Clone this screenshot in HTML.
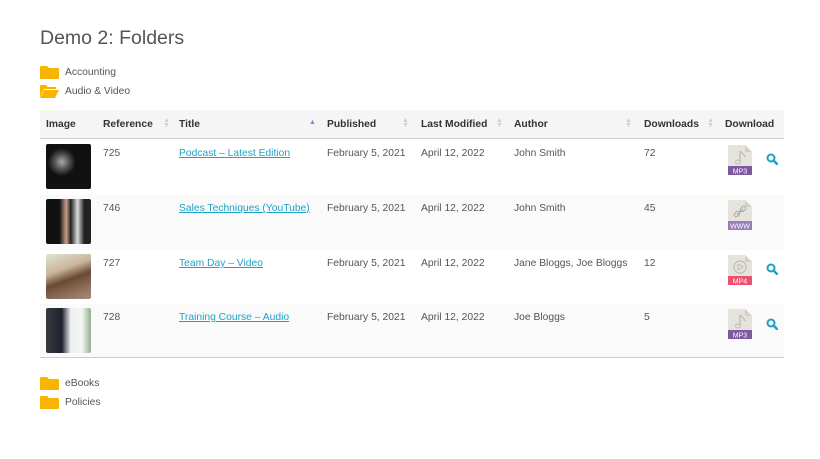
<!DOCTYPE html>
<html><head><meta charset="utf-8"><style>
*{margin:0;padding:0;box-sizing:border-box}
body{width:820px;height:459px;background:#fff;font-family:"Liberation Sans",sans-serif;color:#555;font-size:10.3px;position:relative;overflow:hidden}
.a{position:absolute;white-space:nowrap}
h1{position:absolute;left:40px;top:27px;font-size:19.5px;font-weight:normal;color:#555}
.f{position:absolute;left:40px;width:19px;height:13px}
.hdr{position:absolute;left:40px;top:110px;width:744px;height:29px;background:#f5f5f5;border-bottom:1px solid #ccc}
.th{position:absolute;top:119px;font-weight:bold;color:#333;font-size:10.3px}
.ar{position:absolute;top:118px;color:#d0d0d0;font-size:7px;line-height:5px}
.row{position:absolute;left:40px;width:744px;height:55px}
.td{position:absolute;font-size:10.3px;color:#555}
a{color:#1ea1c8;text-decoration:underline}
.thumb{position:absolute;left:46px;width:45px;height:45px;border-radius:2px}
</style></head><body>
<h1>Demo 2: Folders</h1>
<svg class="f" style="top:66px" viewBox="0 0 19 13"><path d="M0 1Q0 0 1 0H7L9 2H18Q19 2 19 3V12Q19 13 18 13H1Q0 13 0 12Z" fill="#f7b500"/></svg>
<div class="a" style="left:65px;top:67px">Accounting</div>
<svg class="f" style="top:85px" viewBox="0 0 19 13"><path d="M0 1Q0 0 1 0H6L8 2H16V4H4L0 12Z" fill="#f7b500"/><path d="M4 5H19L15 13H0Z" fill="#f7b500"/></svg>
<div class="a" style="left:65px;top:86px">Audio &amp; Video</div>

<div class="hdr"></div>
<div class="a th" style="left:46px">Image</div>
<div class="a th" style="left:103px">Reference</div><div class="ar" style="left:163px">▲<br>▼</div>
<div class="a th" style="left:179px">Title</div><div class="a" style="left:309px;top:119px;color:#8a7fd6;font-size:7px">▲</div>
<div class="a th" style="left:327px">Published</div><div class="ar" style="left:402px">▲<br>▼</div>
<div class="a th" style="left:421px">Last Modified</div><div class="ar" style="left:496px">▲<br>▼</div>
<div class="a th" style="left:514px">Author</div><div class="ar" style="left:625px">▲<br>▼</div>
<div class="a th" style="left:644px">Downloads</div><div class="ar" style="left:707px">▲<br>▼</div>
<div class="a th" style="left:725px">Download</div>

<div class="row" style="top:140px;background:#fff"></div>
<div class="row" style="top:195px;background:#fafafa"></div>
<div class="row" style="top:250px;background:#fff"></div>
<div class="row" style="top:304px;background:#fafafa;height:54px;border-bottom:1px solid #ccc"></div>

<div class="thumb" style="top:144px;background:radial-gradient(circle at 35% 40%,#aaa 0,#555 18%,#111 35%),#111"></div>
<div class="thumb" style="top:199px;background:linear-gradient(90deg,#111 30%,#c9a08a 45%,#222 55%,#ddd 70%,#222 85%)"></div>
<div class="thumb" style="top:254px;background:linear-gradient(160deg,#dfe6d5 0,#c9b49a 35%,#6b4a35 55%,#8a6a55 75%,#a58e7a)"></div>
<div class="thumb" style="top:308px;background:linear-gradient(90deg,#3a3a40 0,#1c2230 35%,#eef0f0 55%,#f5f5f5 80%,#8fb08a)"></div>

<div class="a td" style="left:103px;top:148px">725</div>
<div class="a td" style="left:179px;top:148px"><a>Podcast – Latest Edition</a></div>
<div class="a td" style="left:327px;top:148px">February 5, 2021</div>
<div class="a td" style="left:421px;top:148px">April 12, 2022</div>
<div class="a td" style="left:514px;top:148px">John Smith</div>
<div class="a td" style="left:644px;top:148px">72</div>

<div class="a td" style="left:103px;top:203px">746</div>
<div class="a td" style="left:179px;top:203px"><a>Sales Techniques (YouTube)</a></div>
<div class="a td" style="left:327px;top:203px">February 5, 2021</div>
<div class="a td" style="left:421px;top:203px">April 12, 2022</div>
<div class="a td" style="left:514px;top:203px">John Smith</div>
<div class="a td" style="left:644px;top:203px">45</div>

<div class="a td" style="left:103px;top:258px">727</div>
<div class="a td" style="left:179px;top:258px"><a>Team Day – Video</a></div>
<div class="a td" style="left:327px;top:258px">February 5, 2021</div>
<div class="a td" style="left:421px;top:258px">April 12, 2022</div>
<div class="a td" style="left:514px;top:258px">Jane Bloggs, Joe Bloggs</div>
<div class="a td" style="left:644px;top:258px">12</div>

<div class="a td" style="left:103px;top:312px">728</div>
<div class="a td" style="left:179px;top:312px"><a>Training Course – Audio</a></div>
<div class="a td" style="left:327px;top:312px">February 5, 2021</div>
<div class="a td" style="left:421px;top:312px">April 12, 2022</div>
<div class="a td" style="left:514px;top:312px">Joe Bloggs</div>
<div class="a td" style="left:644px;top:312px">5</div>

<svg class="a" style="left:728px;top:145px" width="24" height="30" viewBox="0 0 24 30"><path d="M0 0H17L24 7V22H0Z" fill="#e6e3dc"/><path d="M17 0V7H24" fill="#d4d0c6"/><path d="M12 6V17M12 6Q16 9 17 12" stroke="#bbb" stroke-width="1.2" fill="none"/><ellipse cx="10" cy="17" rx="2.5" ry="2" fill="none" stroke="#bbb"/><rect y="21" width="24" height="9" fill="#7d5aa0"/><text x="12" y="28.5" font-size="7" fill="#fff" text-anchor="middle" font-family="Liberation Sans">MP3</text></svg>
<svg class="a" style="left:728px;top:200px" width="24" height="30" viewBox="0 0 24 30"><path d="M0 0H17L24 7V22H0Z" fill="#e6e3dc"/><path d="M17 0V7H24" fill="#d4d0c6"/><path d="M9 15L15 9" stroke="#aaa" stroke-width="1.2"/><rect x="6" y="12" width="6" height="4" rx="2" transform="rotate(-45 9 14)" fill="none" stroke="#aaa"/><rect x="12" y="7" width="6" height="4" rx="2" transform="rotate(-45 15 9)" fill="none" stroke="#aaa"/><rect y="21" width="24" height="9" fill="#9a7cb8"/><text x="12" y="28.5" font-size="7" fill="#fff" text-anchor="middle" font-family="Liberation Sans">WWW</text></svg>
<svg class="a" style="left:728px;top:255px" width="24" height="30" viewBox="0 0 24 30"><path d="M0 0H17L24 7V22H0Z" fill="#e6e3dc"/><path d="M17 0V7H24" fill="#d4d0c6"/><circle cx="12" cy="12" r="6" fill="none" stroke="#bbb" stroke-width="1.2"/><path d="M10 9L15 12L10 15Z" fill="none" stroke="#bbb"/><rect y="21" width="24" height="9" fill="#f0506e"/><text x="12" y="28.5" font-size="7" fill="#fff" text-anchor="middle" font-family="Liberation Sans">MP4</text></svg>
<svg class="a" style="left:728px;top:309px" width="24" height="30" viewBox="0 0 24 30"><path d="M0 0H17L24 7V22H0Z" fill="#e6e3dc"/><path d="M17 0V7H24" fill="#d4d0c6"/><path d="M12 6V17M12 6Q16 9 17 12" stroke="#bbb" stroke-width="1.2" fill="none"/><ellipse cx="10" cy="17" rx="2.5" ry="2" fill="none" stroke="#bbb"/><rect y="21" width="24" height="9" fill="#7d5aa0"/><text x="12" y="28.5" font-size="7" fill="#fff" text-anchor="middle" font-family="Liberation Sans">MP3</text></svg>

<svg class="a" style="left:766px;top:153px" width="12" height="12" viewBox="0 0 12 12"><circle cx="5" cy="5" r="3.5" fill="none" stroke="#1ea1c8" stroke-width="2"/><path d="M7.5 7.5L11 11" stroke="#1ea1c8" stroke-width="2.4" stroke-linecap="round"/></svg>
<svg class="a" style="left:766px;top:263px" width="12" height="12" viewBox="0 0 12 12"><circle cx="5" cy="5" r="3.5" fill="none" stroke="#1ea1c8" stroke-width="2"/><path d="M7.5 7.5L11 11" stroke="#1ea1c8" stroke-width="2.4" stroke-linecap="round"/></svg>
<svg class="a" style="left:766px;top:318px" width="12" height="12" viewBox="0 0 12 12"><circle cx="5" cy="5" r="3.5" fill="none" stroke="#1ea1c8" stroke-width="2"/><path d="M7.5 7.5L11 11" stroke="#1ea1c8" stroke-width="2.4" stroke-linecap="round"/></svg>

<svg class="f" style="top:377px" viewBox="0 0 19 13"><path d="M0 1Q0 0 1 0H7L9 2H18Q19 2 19 3V12Q19 13 18 13H1Q0 13 0 12Z" fill="#f7b500"/></svg>
<div class="a" style="left:65px;top:378px">eBooks</div>
<svg class="f" style="top:396px" viewBox="0 0 19 13"><path d="M0 1Q0 0 1 0H7L9 2H18Q19 2 19 3V12Q19 13 18 13H1Q0 13 0 12Z" fill="#f7b500"/></svg>
<div class="a" style="left:65px;top:397px">Policies</div>
</body></html>
